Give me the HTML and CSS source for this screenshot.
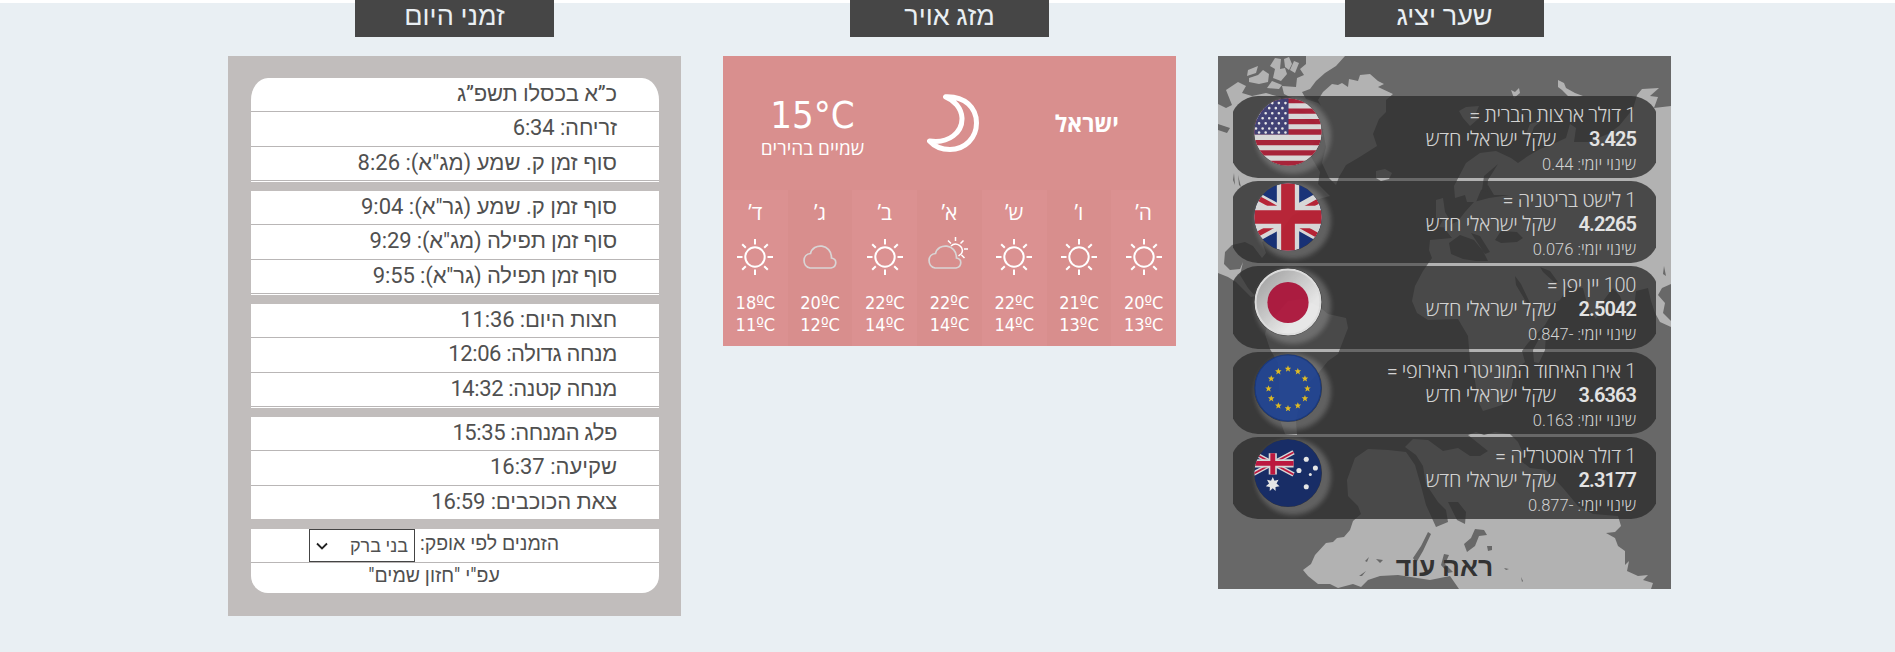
FILE: index.html
```
<!DOCTYPE html>
<html lang="he" dir="rtl">
<head>
<meta charset="utf-8">
<title>מידע יומי</title>
<link rel="stylesheet" href="styles.css">
</head>
<body>
<svg class="defs" width="0" height="0">
  <defs>
    <clipPath id="disc"><circle cx="33.5" cy="33.5" r="33.2"/></clipPath>
    <linearGradient id="silver" x1="0" y1="0" x2="1" y2="1"><stop offset=".1" stop-color="#b4b4b4"/><stop offset=".7" stop-color="#fff"/></linearGradient>
    <symbol id="sun" viewBox="0 0 36 36"><g fill="none" stroke="#fff" stroke-width="2"><circle cx="18" cy="18" r="9.7"/><path d="M18 0v5.5M18 30.500v5.500M0 18h5.500M30.500 18h5.500M5.200 5.200l3.600 3.600M27.200 27.200l3.600 3.600M5.200 30.800l3.600-3.600M27.200 8.800l3.600-3.600"/></g></symbol>
    <symbol id="cloud" viewBox="0 0 34 24"><path d="M7 23H28C34 22 34.500 14 28.500 13 28.500 -1.500 10 -2.500 7.500 8.500 -1 9-1 21.500 7 23z" fill="none" stroke="#d9d5d5" stroke-width="1.700"/></symbol>
    <path id="star" d="M0-3.300L.9-1H3.200L1.400.6 2.100 3 0 1.600-2.100 3-1.400.6-3.200-1H-.9z"/>
  </defs>
</svg>
<main class="columns">
  <section class="column">
    <h2 class="title title-rates">שער יציג</h2>
    <div class="rates">
      <svg class="map" viewBox="0 0 453 533">
        <g fill="#b2b2b2">
          <path d="M88 0H127L118 10 107 17 98 25 92 33 84 36 88 43 100 47 112 58 114 75 102 72 92 60 80 52 74 42 66 38 64 30 78 31 79 22 86 19 82 13 88 8z"/>
          <path d="M57 2l6 1-1 10 5-1 2 6-6 7-8-3 2-9-5-3zM66 3l5-2 3 7-3 6-4-3zM30 14l10-4-2 7-9 3zM31 22l9-3 5-5 6 4-1 8-9 2-10-2zM54 25l10 4-3 4-12-1zM76 5l5 2-4 10-5-3z"/>
          <path d="M8 34L20 26 28 30 24 37 34 40 48 37 62 41 68 48 78 55 90 66 100 72 105 80 96 86 92 99 102 116 100 128 112 140 97 144 88 152 74 160 64 174 51 181 44 186 48 197 44 202 35 190 27 186 14 189 7 196 6 208 12 214 22 213 25 206 22 219 30 232 37 240 33 241 18 226 10 221 0 217V48L8 52 14 49z"/>
          <path d="M105 36L114 28 120 29 124 27 130 31 131 23 140 25 142 19 152 18 160 25 166 28 160 31 175 38 168 44 168 56 161 63 155 78 159 90 140 102 128 109 121 121 118 129 111 122 104 107 108 91 105 75 108 60 100 44z"/>
          <path d="M158 115l9-2 7 4-3 6-8 2-5-3zM293 34l4 2 4-4 1 5-6 5zM340 24l6 3 2 5 9 5 8 3-7 1-8-1-6-6-4-3zM241 55l7-4 13-1-4 9 3 4-8 7-7-8zM308 78l4-10 12-4-8 7-4 11zM218 144l7-2 2 14 6 10-2 6-10-1 4-7-7-2z"/>
          <path d="M262 97L278 95 293 102 300 107 310 100 322 93 335 88 348 82 352 68 358 72 356 86 370 86 390 78 401 70 415 53 419 39 424 33 441 32 432 40 440 41 436 52 453 50V228L444 232 440 239 447 247 445 257 453 265V271L442 266 437 257 433 245 430 232 418 235 416 251 408 255 402 240 395 232 385 245 378 263 371 255 365 232 350 231 342 244 326 252 334 257 327 269 310 287 304 295 307 306 297 315 293 333 284 349 265 355 260 345 257 325 252 304 250 280 240 263 210 264 199 257 194 245 197 230 205 215 214 202 211 194 212 184 234 182 226 172 240 165 247 156 256 146 271 142 292 139 276 139 270 129 263 134 258 146 249 146 247 139 237 142 236 130 248 107z"/>
          <path d="M70 245l15-2 15 7 10 8 18 4 2 10-5 13-5 13-10 7-8 10-12 13-8 17-4 20 1 14-12-1-5-14-1-35-1-22-8-14-5-15 3-10zM315 294l6-11 7-5-1 16-6 13-5-1z"/>
          <path d="M250 379L258 376 266 379 277 376 292 378 300 386 305 397 303 405 312 412 328 414 345 432 360 450 375 458 400 460 403 470 397 476 388 477 397 482 400 490 407 495 407 509 411 505 409 515 420 520 430 519 425 524 435 527 433 533H241L232 520 212 524 180 519 162 520 150 524 143 531 135 528 120 532 112 528 100 528 90 520 85 514 93 508 97 499 108 487 115 486 119 482 126 481 132 474 135 465 143 458 140 450 130 440 129 424 137 402 150 393 170 394 188 396 197 409 203 430 208 449 218 471 230 466 228 454 220 446 208 428 205 410 198 399 187 391 195 383 210 384 225 395 240 392 252 400 262 400 270 395z"/>
        </g>
        <g fill="#686868">
          <path d="M0 68l12 4-3 5-9-3zM16 117l1 12-2-5zM20 119l3 12-2-2zM231 187l11-8 14 5 9 11 5 10-12 0-13-2-12-5zM253 177l9 3 10 16-5 2zM277 184l6-9 16 1 6 6-6 4-16 1zM297 220l6 8 10 21-3 0-12-20zM322 211l10 4 8 11-4 0-11-10zM280 108l-10 16-1 12-5-2 2-14zM446 210l2 10-3-2z"/>
          <path d="M210 476l3 2-8 17-7 12-3-5 8-12zM257 473l9 1 3 5-8 1-4 10-8 6-3-8 7-6zM226 498l5 1-4 9 8 8-5 1-7-8zM230 446l10 0 8 10-1 12-8-4zM158 503l7 1-3 3zM141 520l7-5-4 5zM269 490l5 0 0 4-4 1zM286 512l5 1-3 1zM303 521l2 4-1 1zM147 505l4-4-2 5z"/>
        </g>
      </svg>
      <ul class="rate-list">
        <li class="rate">
          <div class="rate-text"><span class="name">1 דולר ארצות הברית =</span><span class="value"><b>3.425</b>שקל ישראלי חדש</span><span class="change">שינוי יומי: 0.44</span></div>
          <svg class="flag" viewBox="0 0 67 67"><g clip-path="url(#disc)"><path fill="#eee" d="M0 0h67v67H0z"/><path stroke="#b51f38" stroke-width="5.200" d="M0 2.500h67M0 13h67M0 23.200h67M0 33.500h67M0 44h67M0 54h67M0 64.500h67"/><path fill="#eee" d="M0 36h34v5H0z"/><path fill="#41417c" d="M0 0h34v36H0z"/><path stroke="#fff" stroke-width="2.600" stroke-linecap="round" stroke-dasharray="0 6.500" d="M5 5H33M2 10H33M5 15H33M2 20H33M5 25H33M2 30H33M5 34H33"/></g></svg>
        </li>
        <li class="rate">
          <div class="rate-text"><span class="name">1 לישט בריטניה =</span><span class="value"><b>4.2265</b>שקל ישראלי חדש</span><span class="change">שינוי יומי: 0.076</span></div>
          <svg class="flag" viewBox="0 0 67 67"><g clip-path="url(#disc)"><path fill="#14307f" d="M0 0h67v67H0z"/><path stroke="#eee" stroke-width="14" d="M-14 7L81 60M81 7L-14 60"/><path stroke="#c82136" stroke-width="5" d="M-14 5L28 28M81 8L40 31M-14 60L28 37M81 62L40 39"/><path stroke="#eee" stroke-width="22" d="M33.500 0v67M0 33.500h67"/><path stroke="#c82136" stroke-width="13.500" d="M33.500 0v67M0 33.500h67"/></g></svg>
        </li>
        <li class="rate">
          <div class="rate-text"><span class="name">100 יין יפן =</span><span class="value"><b>2.5042</b>שקל ישראלי חדש</span><span class="change">שינוי יומי: -0.847</span></div>
          <svg class="flag" viewBox="0 0 67 67"><circle cx="33.500" cy="33.500" r="32" fill="url(#silver)" stroke="#f4f4f4" stroke-width="2"/><circle cx="33.500" cy="34" r="20.300" fill="#bd1842"/></svg>
        </li>
        <li class="rate">
          <div class="rate-text"><span class="name">1 אירו האיחוד המוניטרי האירופי =</span><span class="value"><b>3.6363</b>שקל ישראלי חדש</span><span class="change">שינוי יומי: 0.163</span></div>
          <svg class="flag" viewBox="0 0 67 67"><circle cx="33.500" cy="33.500" r="32.600" fill="#21479b" stroke="#173a87" stroke-width="1.200"/><g fill="#f6cd20"><use href="#star" x="33.500" y="14.500"/><use href="#star" x="43.200" y="17.100"/><use href="#star" x="50.200" y="24.200"/><use href="#star" x="52.700" y="34"/><use href="#star" x="50.200" y="43.700"/><use href="#star" x="43.200" y="50.800"/><use href="#star" x="33.500" y="53.500"/><use href="#star" x="24" y="50.800"/><use href="#star" x="17" y="43.700"/><use href="#star" x="14.300" y="34"/><use href="#star" x="17" y="24.200"/><use href="#star" x="24" y="17.100"/></g></svg>
        </li>
        <li class="rate">
          <div class="rate-text"><span class="name">1 דולר אוסטרליה =</span><span class="value"><b>2.3177</b>שקל ישראלי חדש</span><span class="change">שינוי יומי: -0.877</span></div>
          <svg class="flag" viewBox="0 0 67 67"><g clip-path="url(#disc)"><path fill="#142c6d" d="M0 0h67v67H0z"/><path stroke="#eee" stroke-width="4.500" d="M-2 13L39 35M39 13L-2 35"/><path stroke="#d01440" stroke-width="1.800" d="M-2 13L39 35M39 13L-2 35"/><path stroke="#eee" stroke-width="8" d="M18.500 14v21M0 24h39"/><path stroke="#d01440" stroke-width="4.800" d="M18.500 14v21M0 24h39"/><path fill="#fff" d="M18.500 37.500l1.700 3.700 4-1-2 3.600 3 2.700-4 .7.100 4-2.800-2.700-3 2.700.1-4-4-.7 3.200-2.700-2-3.600 4 1z"/><g fill="#fff"><circle cx="51.500" cy="20" r="2.500"/><circle cx="44.300" cy="31" r="2.500"/><circle cx="60.500" cy="28.500" r="2.500"/><circle cx="55.500" cy="35" r="1.500"/><circle cx="51.500" cy="47" r="2.500"/></g></g></svg>
        </li>
      </ul>
      <a class="more">ראה עוד</a>
    </div>
  </section>

  <section class="column">
    <h2 class="title title-weather">מזג אויר</h2>
    <div class="weather">
      <div class="now">
        <div class="place">ישראל</div>
        <svg class="moon" viewBox="0 0 52 58"><path d="M18.500 2.800C38 2 49.500 14 49.500 29 49.500 44 38 55.500 23 55.500 14 55.500 7 52 2.500 47 22 50 35.500 38 35 24 34.500 14 27 6 18.500 2.800z" fill="none" stroke="#fff" stroke-width="5" stroke-linejoin="round"/></svg>
        <div class="current"><span class="degrees" dir="ltr">15°C</span><span class="sky">שמיים בהירים</span></div>
      </div>
      <div class="week">
        <div class="day"><span class="day-name">ה’</span><svg class="day-icon"><use href="#sun"/></svg><span class="temps" dir="ltr">20ºC<br>13ºC</span></div>
        <div class="day"><span class="day-name">ו’</span><svg class="day-icon"><use href="#sun"/></svg><span class="temps" dir="ltr">21ºC<br>13ºC</span></div>
        <div class="day"><span class="day-name">ש’</span><svg class="day-icon"><use href="#sun"/></svg><span class="temps" dir="ltr">22ºC<br>14ºC</span></div>
        <div class="day"><span class="day-name">א’</span><svg class="day-icon partly" viewBox="0 0 40 36"><use href="#cloud" x="0" y="6" width="34" height="24"/><path d="M23 7C28 2 37 8 33.500 14.500L30.500 17M27.500-2v4M20 1.500l3 3M35.500 1.500l-3 3M36 10h4M33.500 16l3 3" fill="none" stroke="#fff" stroke-width="1.500"/></svg><span class="temps" dir="ltr">22ºC<br>14ºC</span></div>
        <div class="day"><span class="day-name">ב’</span><svg class="day-icon"><use href="#sun"/></svg><span class="temps" dir="ltr">22ºC<br>14ºC</span></div>
        <div class="day"><span class="day-name">ג’</span><svg class="day-icon" viewBox="0 0 36 36"><use href="#cloud" x="1" y="6" width="34" height="24"/></svg><span class="temps" dir="ltr">20ºC<br>12ºC</span></div>
        <div class="day"><span class="day-name">ד’</span><svg class="day-icon"><use href="#sun"/></svg><span class="temps" dir="ltr">18ºC<br>11ºC</span></div>
      </div>
    </div>
  </section>

  <section class="column">
    <h2 class="title title-times">זמני היום</h2>
    <div class="times">
      <ul class="group"><li>כ”א בכסלו תשפ”ג</li><li>זריחה: 6:34</li><li class="wide">סוף זמן ק. שמע (מג"א): 8:26</li></ul>
      <ul class="group"><li class="wide">סוף זמן ק. שמע (גר"א): 9:04</li><li>סוף זמן תפילה (מג"א): 9:29</li><li>סוף זמן תפילה (גר"א): 9:55</li></ul>
      <ul class="group"><li>חצות היום: 11:36</li><li class="tight">מנחה גדולה: 12:06</li><li class="tight">מנחה קטנה: 14:32</li></ul>
      <ul class="group"><li class="tight">פלג המנחה: 15:35</li><li class="wide">שקיעה: 16:37</li><li>צאת הכוכבים: 16:59</li></ul>
      <div class="group notes">
        <div class="horizon"><span>הזמנים לפי אופק:</span><span class="select">בני ברק<svg class="chevron" viewBox="0 0 12 8"><path d="M1 1.500l5 5 5-5" fill="none" stroke="#222" stroke-width="1.800"/></svg></span></div>
        <div class="source">עפ"י "חזון שמים"</div>
      </div>
    </div>
  </section>
</main>
</body>
</html>
```
FILE: styles.css
```
* { box-sizing: border-box; }
body { margin: 0; height: 652px; overflow: hidden; background: linear-gradient(#fff 3px, #e9eff3 3px); font-family: Roboto, "Liberation Sans", sans-serif; color: #505050; }
ul { margin: 0; padding: 0; list-style: none; }
.defs { position: absolute; }
.columns { display: flex; gap: 42px; align-items: flex-start; margin: 0 224px 0 228px; }
.column { width: 453px; }
.title { width: 199px; height: 37px; margin: 0 auto 19px; background: #464646; color: #e9eff3; font-size: 27px; font-weight: 400; line-height: 32px; text-align: center; }

.rates { position: relative; height: 533px; padding: 40px 15px 0; background: #686868; overflow: hidden; }
.map { position: absolute; left: 0; top: 0; width: 453px; height: 533px; }
.rate-list { position: relative; display: flex; flex-direction: column; gap: 3px; overflow: hidden; }
.rate { display: flex; justify-content: space-between; height: 82.2px; margin: 0 -3px; padding: 0 23px 0 24px; border-radius: 28px; background: rgba(44, 44, 44, .78); }
.rate-text { display: flex; flex-direction: column; padding-top: 6px; color: #d2d2d2; font-family: Roboto, "Open Sans", sans-serif; font-weight: 300; }
.name { height: 25px; font-size: 20px; line-height: 26px; letter-spacing: -.35px; }
.value { display: flex; height: 25px; font-size: 20px; line-height: 25px; letter-spacing: -.25px; }
.value b { width: 80px; color: #e3e3e3; letter-spacing: -.9px; font-weight: 600; }
.change { font-size: 16.500px; line-height: 25px; }
.flag { width: 68px; height: 68px; margin-top: 2px; border-radius: 50%; opacity: .87; box-shadow: 5px 4px 5px 4px rgba(255, 255, 255, .24); }
.more { position: relative; display: block; margin-top: 31px; text-align: center; color: #333; font-size: 26.500px; font-weight: 700; line-height: 34px; }

.weather { height: 290px; background: #d98f8e; color: #fff; font-family: "DejaVu Sans Condensed", "DejaVu Sans", "Open Sans", sans-serif; font-stretch: condensed; }
.now { display: grid; grid-template-columns: 64px 52px 105px; column-gap: 69px; height: 134px; padding: 38px 57px 0 37px; }
.place { margin-top: 17px; white-space: nowrap; font: 700 23px/24px "Open Sans", sans-serif; }
.moon { width: 52px; height: 58px; margin-right: 7px; }
.current { display: flex; flex-direction: column; align-items: center; white-space: nowrap; }
.degrees { font-size: 38px; line-height: 42px; }
.sky { font: 19px/24px "Open Sans", sans-serif; }
.week { display: grid; grid-template-columns: repeat(7, 1fr); height: 156px; }
.day { display: flex; flex-direction: column; align-items: center; background: #db9191; }
.day:nth-child(even) { background: #d88e8d; }
.day-name { height: 49px; padding-top: 10px; font: 21px/24px "Open Sans", sans-serif; }
.day-icon { width: 36px; height: 36px; overflow: visible; }
.partly { width: 40px; margin-left: -3px; }
.temps { margin-top: 17px; font-size: 18px; line-height: 22px; }

.times { height: 560px; padding: 22px 22px 0 23px; background: #c1bdbc; }
.group { height: 104px; margin-bottom: 9px; background: #fff; }
.group li { height: 34.300px; padding-right: 42px; border-bottom: 1px solid #b9b6b6; font-size: 22px; line-height: 31px; letter-spacing: -.13px; }
.group .tight { letter-spacing: -.4px; }
.group .wide { letter-spacing: 0; }
.group:first-child { border-radius: 17px 17px 0 0 / 22px 22px 0 0; }
.group:nth-child(4) { height: 102px; margin-bottom: 10px; }
.group:nth-child(4) li:last-child { border-bottom: 0; }
.notes { height: 64px; padding-right: 42px; border-radius: 0 0 17px 17px; font-size: 19.500px; }
.horizon { display: flex; justify-content: center; gap: 5px; height: 34px; margin-right: -42px; padding-right: 42px; border-bottom: 1px solid #b9b6b6; line-height: 30px; }
.select { display: flex; justify-content: space-between; align-items: center; width: 106px; height: 33px; padding: 0 6px; border: 1px solid #444; font-size: 18px; }
.chevron { width: 12px; height: 8px; }
.source { text-align: center; line-height: 26px; }
```
